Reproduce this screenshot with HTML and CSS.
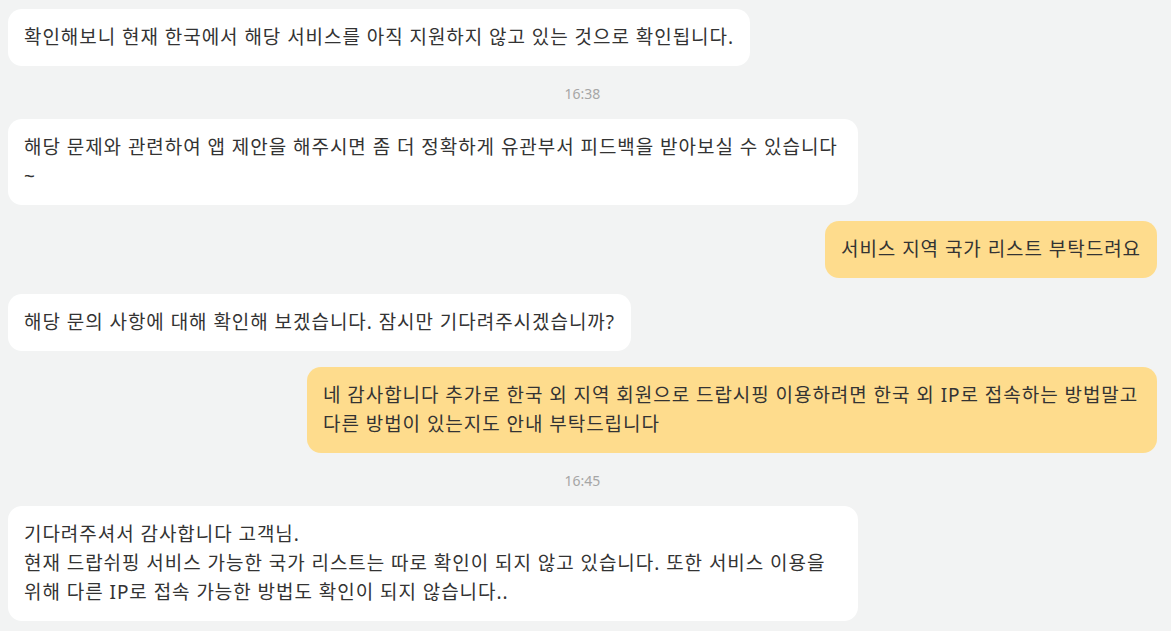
FILE: index.html
```html
<!DOCTYPE html>
<html lang="ko">
<head>
    <meta charset="UTF-8">
    <meta name="viewport" content="width=device-width, initial-scale=1.0">
    <title>상담 채팅</title>
    <link rel="stylesheet" href="styles.css">
</head>
<body>
    <div class="chat">
        <div class="msg left">
            <div class="bubble">확인해보니 현재 한국에서 해당 서비스를 아직 지원하지 않고 있는 것으로 확인됩니다.</div>
        </div>
        <div class="time">16:38</div>
        <div class="msg left">
            <div class="bubble">해당 문제와 관련하여 앱 제안을 해주시면 좀 더 정확하게 유관부서 피드백을 받아보실 수 있습니다 ~</div>
        </div>
        <div class="msg right">
            <div class="bubble">서비스 지역 국가 리스트 부탁드려요</div>
        </div>
        <div class="msg left">
            <div class="bubble">해당 문의 사항에 대해 확인해 보겠습니다. 잠시만 기다려주시겠습니까?</div>
        </div>
        <div class="msg right">
            <div class="bubble">네 감사합니다 추가로 한국 외 지역 회원으로 드랍시핑 이용하려면 한국 외 IP로 접속하는 방법말고 다른 방법이 있는지도 안내 부탁드립니다</div>
        </div>
        <div class="time">16:45</div>
        <div class="msg left">
            <div class="bubble">기다려주셔서 감사합니다 고객님.<br>현재 드랍쉬핑 서비스 가능한 국가 리스트는 따로 확인이 되지 않고 있습니다. 또한 서비스 이용을 위해 다른 IP로 접속 가능한 방법도 확인이 되지 않습니다..</div>
        </div>
    </div>
</body>
</html>
```

FILE: styles.css
```css
html, body {
    margin: 0;
    background: #f2f3f3;
}

body {
    font-family: "Noto Sans", "Noto Sans CJK KR", sans-serif;
    color: #333333;
    height: 100vh;
    overflow: hidden;
}

.chat {
    display: flex;
    flex-direction: column;
    gap: 16px;
    padding: 9px 14px 0 8px;
}

.msg {
    display: flex;
}

.msg.right {
    justify-content: flex-end;
}

.bubble {
    max-width: 818px;
    padding: 14px 16px;
    border-radius: 14px;
    background: #ffffff;
    font-size: 19px;
    line-height: 29px;
    letter-spacing: 0.95px;
    word-break: keep-all;
}

.msg.right .bubble {
    background: #fedc8d;
}

.time {
    text-align: center;
    font-size: 14px;
    line-height: 19px;
    padding-top: 2px;
    color: #a6a6a6;
}
```
